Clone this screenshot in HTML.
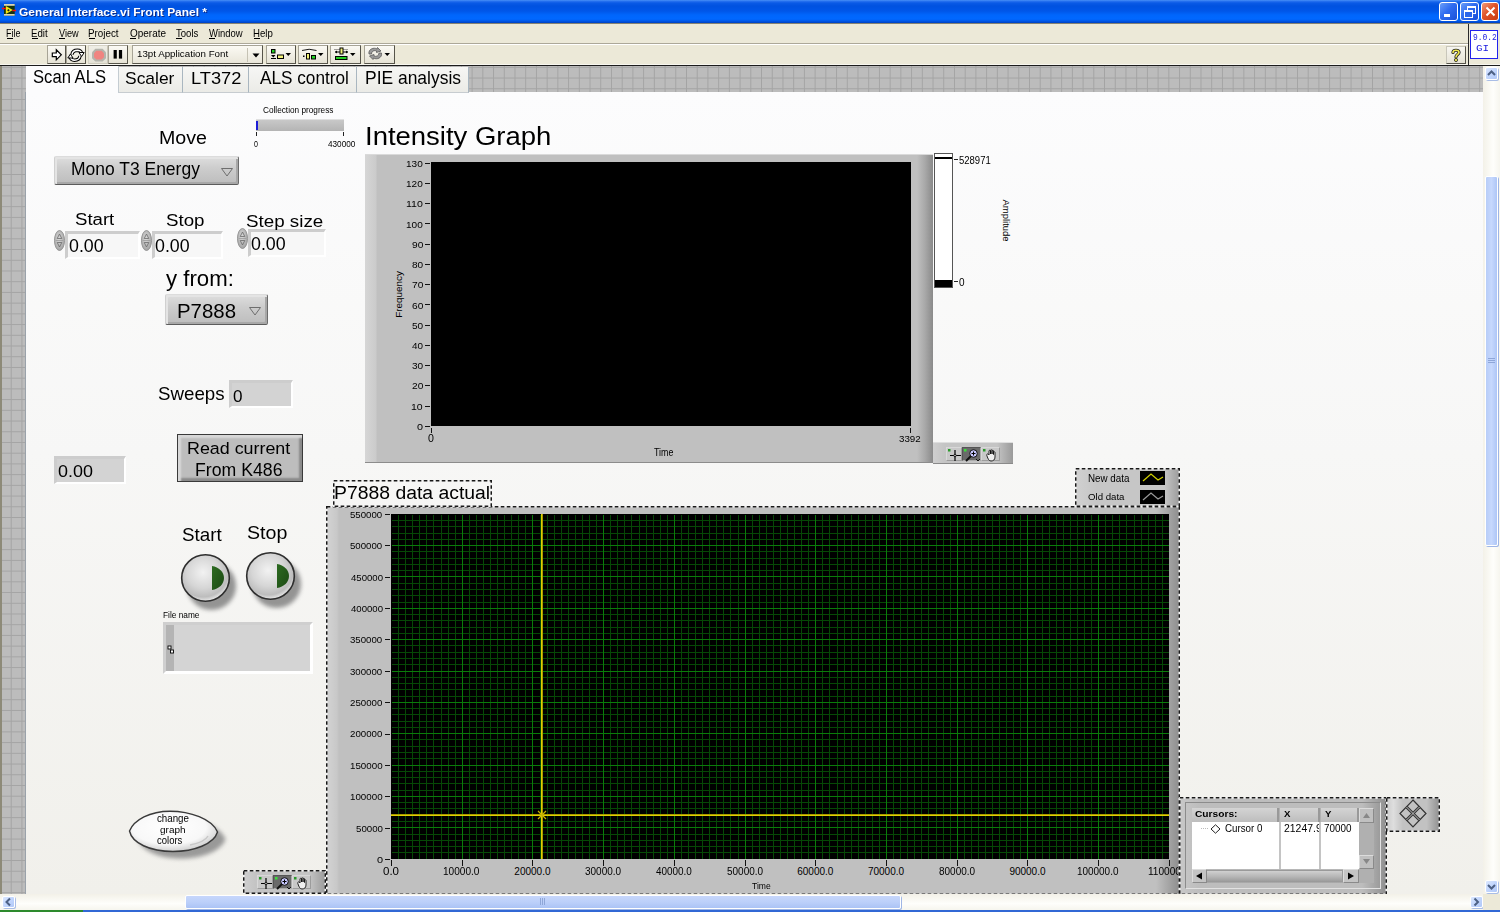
<!DOCTYPE html>
<html><head><meta charset="utf-8"><style>
html,body{margin:0;padding:0;width:1500px;height:912px;overflow:hidden;background:#ece9d8}
.t{position:absolute;line-height:1;white-space:pre;transform-origin:0 0;font-family:"Liberation Sans",sans-serif}
</style></head><body>
<div style="position:absolute;left:0px;top:0px;width:1500px;height:912px;background:#ece9d8"></div><div style="position:absolute;left:0px;top:66px;width:1483px;height:828px;background-color:#bcbcbc;background-image:linear-gradient(to right,#a4a4a4 0,#a4a4a4 1px,transparent 1px),linear-gradient(to bottom,#a4a4a4 0,#a4a4a4 1px,transparent 1px);background-size:10.72px 10.72px;background-position:0 0.84px"></div><div style="position:absolute;left:0px;top:66px;width:2px;height:844px;background:#8d8a78"></div><div style="position:absolute;left:25px;top:92px;width:1px;height:802px;background:#9aa2aa"></div><div style="position:absolute;left:0px;top:0px;width:1500px;height:23px;background:linear-gradient(to bottom,#4d95f7 0px,#2a74f0 1px,#0a5ae6 3px,#0052e0 6px,#0056e8 11px,#0066fc 15px,#0068ff 19px,#0058ea 21px,#0040c0 23px)"></div><div style="position:absolute;left:0px;top:23px;width:1500px;height:1px;background:#868373"></div><div style="position:absolute;left:1439px;top:2px;width:19px;height:19px;box-sizing:border-box;border:1px solid #fff;border-radius:3px;background:linear-gradient(135deg,#6a9ef8 0%,#2f6cf0 45%,#1a50d8 100%);overflow:hidden"><div style="position:absolute;left:4px;top:11px;width:6px;height:3px;background:#fff"></div></div><div style="position:absolute;left:1460px;top:2px;width:19px;height:19px;box-sizing:border-box;border:1px solid #fff;border-radius:3px;background:linear-gradient(135deg,#6a9ef8 0%,#2f6cf0 45%,#1a50d8 100%);overflow:hidden"><div style="position:absolute;left:6px;top:3px;width:7px;height:5px;border:1px solid #fff;border-top-width:2px"></div><div style="position:absolute;left:3px;top:7px;width:7px;height:5px;border:1px solid #fff;border-top-width:2px;background:#2b66ea"></div></div><div style="position:absolute;left:1481px;top:2px;width:18px;height:19px;box-sizing:border-box;border:1px solid #fff;border-radius:3px;background:linear-gradient(135deg,#f09a7a 0%,#e0552a 45%,#c83a12 100%);overflow:hidden"><svg width="17" height="17" style="position:absolute;left:0;top:0"><path d="M4.5 4.5 L12.5 12.5 M12.5 4.5 L4.5 12.5" stroke="#fff" stroke-width="2"/></svg></div><svg style="position:absolute;left:0;top:0" width="18" height="18"><rect x="4" y="4" width="10.7" height="11.7" fill="#123412"/><rect x="4" y="4" width="10.7" height="1.8" fill="#d8d4b8"/><rect x="4" y="14" width="10.7" height="1.7" fill="#d8d4b8"/><path d="M5.8 6 L12.8 10 L5.8 14 Z" fill="#f6e614"/><path d="M8.4 8.9 L9.7 10.2 L8.4 11.5 L7.1 10.2 Z" fill="#202020"/><path d="M2 8.5 H6 M12.3 10.5 H16" stroke="#f01010" stroke-width="1.3"/></svg><div style="position:absolute;left:0px;top:43px;width:1469px;height:1px;background:#aca899"></div><div style="position:absolute;left:0px;top:44px;width:1469px;height:1px;background:#ffffff"></div><div style="position:absolute;left:0px;top:64px;width:1500px;height:1px;background:#f8f7f0"></div><div style="position:absolute;left:0px;top:65px;width:1500px;height:1px;background:#1c1c1c"></div><div style="position:absolute;left:1468px;top:24px;width:1px;height:41px;background:#2a2a2a"></div><div style="position:absolute;left:1470px;top:30px;width:28px;height:29px;box-sizing:border-box;border:1.5px solid #2222ee;background:#fff"></div><div style="position:absolute;left:1446px;top:46px;width:20px;height:18px;box-sizing:border-box;border:1px solid;border-color:#c8c6ba #55534a #55534a #c8c6ba;background:linear-gradient(#f7f6f0,#e6e3d6)"><svg width="18" height="16" style="position:absolute;left:0;top:0"><path d="M6 5.5 C6 2.5 12 2.5 12 5.5 C12 7.5 9 7.5 9 10" fill="none" stroke="#222" stroke-width="3.2" stroke-linecap="round"/><path d="M6 5.5 C6 2.5 12 2.5 12 5.5 C12 7.5 9 7.5 9 10" fill="none" stroke="#f2ea50" stroke-width="1.6" stroke-linecap="round"/><circle cx="9" cy="13" r="1.6" fill="#f2ea50" stroke="#222" stroke-width="0.8"/></svg></div><div style="position:absolute;left:47px;top:45px;width:19px;height:19px;box-sizing:border-box;border:1px solid;border-color:#a7a496 #56544a #56544a #a7a496;background:linear-gradient(#fbfaf5,#e6e3d5)"></div><div style="position:absolute;left:66px;top:45px;width:20px;height:19px;box-sizing:border-box;border:1px solid;border-color:#a7a496 #56544a #56544a #a7a496;background:linear-gradient(#fbfaf5,#e6e3d5)"></div><div style="position:absolute;left:88px;top:45px;width:20px;height:19px;box-sizing:border-box;border:1px solid;border-color:#d6d3c6 #c9c6b8 #c9c6b8 #d6d3c6;background:linear-gradient(#efeee6,#e4e2d6)"></div><div style="position:absolute;left:108px;top:45px;width:20px;height:19px;box-sizing:border-box;border:1px solid;border-color:#a7a496 #56544a #56544a #a7a496;background:linear-gradient(#fbfaf5,#e6e3d5)"></div><svg style="position:absolute;left:0;top:0" width="140" height="66"><path d="M52.3 53 H56.3 V49.8 L61.3 54.8 L56.3 59.8 V56.6 H52.3 Z" fill="#fff" stroke="#000" stroke-width="1.2" stroke-linejoin="miter"/><path d="M72 54.5 Q72.5 50.3 77.5 50.3 Q81 50.5 81.5 53" fill="none" stroke="#000" stroke-width="3.4"/><path d="M72 54.5 Q72.5 50.3 77.5 50.3 Q81 50.5 81.5 53" fill="none" stroke="#fff" stroke-width="1.4"/><path d="M79 52.5 H84.2 L81.6 56.5 Z" fill="#fff" stroke="#000" stroke-width="1"/><path d="M80 56 Q79.5 60.2 74.5 60.2 Q71 60 70.5 57.5" fill="none" stroke="#000" stroke-width="3.4"/><path d="M80 56 Q79.5 60.2 74.5 60.2 Q71 60 70.5 57.5" fill="none" stroke="#fff" stroke-width="1.4"/><path d="M67.8 58 H73 L70.4 54 Z" fill="#fff" stroke="#000" stroke-width="1"/><path d="M95.3 48.8 H102.6 L106 52.2 V58.3 L102.6 61.5 H95.3 L92 58.3 V52.2 Z" fill="#b4b4ac"/><path d="M96.3 50.8 H101.6 L104 53.2 V57.3 L101.6 59.6 H96.3 L94 57.3 V53.2 Z" fill="#f08480"/><rect x="113.6" y="50" width="3.2" height="8.6" fill="#000"/><rect x="118.9" y="50" width="3.2" height="8.6" fill="#000"/></svg><div style="position:absolute;left:132px;top:45px;width:131px;height:19px;box-sizing:border-box;border:1px solid;border-color:#a7a496 #56544a #56544a #a7a496;background:linear-gradient(#fbfaf4,#e9e6d9)"><div style="position:absolute;left:114px;top:2px;width:1px;height:14px;background:#c5c2b4"></div><svg width="10" height="6" style="position:absolute;left:119px;top:7px"><path d="M0.5 0.5 H7.5 L4 4.5 Z" fill="#000"/></svg></div><div style="position:absolute;left:266px;top:45px;width:30px;height:19px;box-sizing:border-box;border:1px solid;border-color:#a7a496 #56544a #56544a #a7a496;background:linear-gradient(#fbfaf5,#e6e3d5)"></div><div style="position:absolute;left:298px;top:45px;width:30px;height:19px;box-sizing:border-box;border:1px solid;border-color:#a7a496 #56544a #56544a #a7a496;background:linear-gradient(#fbfaf5,#e6e3d5)"></div><div style="position:absolute;left:330px;top:45px;width:31px;height:19px;box-sizing:border-box;border:1px solid;border-color:#a7a496 #56544a #56544a #a7a496;background:linear-gradient(#fbfaf5,#e6e3d5)"></div><div style="position:absolute;left:364px;top:45px;width:31px;height:19px;box-sizing:border-box;border:1px solid;border-color:#a7a496 #56544a #56544a #a7a496;background:linear-gradient(#fbfaf5,#e6e3d5)"></div><svg style="position:absolute;left:0;top:0" width="400" height="66"><rect x="271.5" y="49.5" width="3.5" height="3.5" fill="#22d022" stroke="#000" stroke-width="1"/><path d="M271 55 H275.5 L273.25 57.5 Z" fill="#000"/><rect x="271" y="58" width="5" height="1" fill="#000"/><rect x="277.5" y="55" width="6" height="3.5" fill="#f2f27a" stroke="#000" stroke-width="1"/><path d="M285.5 53 H291 L288.25 56 Z" fill="#000"/><path d="M302 50.5 Q309 48 316.5 50.5" fill="none" stroke="#000" stroke-width="0.9"/><rect x="303" y="55.5" width="1.5" height="1.5" fill="#000"/><rect x="306.5" y="53.5" width="3" height="5.5" fill="#f2f27a" stroke="#000" stroke-width="1"/><rect x="311.5" y="55.5" width="4" height="3.5" fill="#22d022" stroke="#000" stroke-width="1"/><path d="M318 53 H323.5 L320.75 56 Z" fill="#000"/><path d="M334.5 49.5 H348" stroke="#000" stroke-width="0.7" stroke-dasharray="1 1"/><path d="M335 52 H348" stroke="#000" stroke-width="1"/><path d="M335 52 L337 50.5 V53.5 Z M348 52 L346 50.5 V53.5 Z" fill="#000"/><rect x="340" y="48" width="3" height="6" fill="#f2f27a" stroke="#000" stroke-width="1"/><rect x="335.5" y="56.5" width="11.5" height="3" fill="#22d022" stroke="#000" stroke-width="1"/><path d="M350 53 H355.5 L352.75 56 Z" fill="#000"/><path d="M369 54 C368 49 374 47 377 49 L377.5 47.5 L381 51 L376.5 52.5 L376.5 51 C374.5 50 371.5 51 371.5 54 Z" fill="#9a9a9a" stroke="#5a5a5a" stroke-width="0.8"/><path d="M381.5 53 C382.5 58 376.5 60 373.5 58 L373 59.5 L369.5 56 L374 54.5 L374 56 C376 57 379 56 379 53 Z" fill="#9a9a9a" stroke="#5a5a5a" stroke-width="0.8"/><path d="M384.5 53 H390 L387.25 56 Z" fill="#000"/></svg><div style="position:absolute;left:26px;top:92px;width:1457px;height:802px;background:linear-gradient(to bottom,#fcfcfd 0%,#f7f7f6 45%,#f1f0eb 100%)"></div><div style="position:absolute;left:26px;top:66px;width:93px;height:27px;background:#fcfcfd;border-right:1px solid #c4ccd2;box-sizing:border-box"></div><div style="position:absolute;left:119px;top:67px;width:64px;height:26px;box-sizing:border-box;background:linear-gradient(#f6f6f4,#ebebe7);border-right:1.5px solid #a9b6c0;border-bottom:1px solid #c7ccd0"></div><div style="position:absolute;left:183px;top:67px;width:66px;height:26px;box-sizing:border-box;background:linear-gradient(#f6f6f4,#ebebe7);border-right:1.5px solid #a9b6c0;border-bottom:1px solid #c7ccd0"></div><div style="position:absolute;left:249px;top:67px;width:108px;height:26px;box-sizing:border-box;background:linear-gradient(#f6f6f4,#ebebe7);border-right:1.5px solid #a9b6c0;border-bottom:1px solid #c7ccd0"></div><div style="position:absolute;left:357px;top:67px;width:112px;height:26px;box-sizing:border-box;background:linear-gradient(#f6f6f4,#ebebe7);border-right:1.5px solid #a9b6c0;border-bottom:1px solid #c7ccd0"></div><div style="position:absolute;left:54px;top:156px;width:185px;height:29px;box-sizing:border-box;border:1px solid;border-color:#dcdcdc #6c6c6c #5c5c5c #d0d0d0;border-radius:2px;background:linear-gradient(#dedede 0%,#cdcdcd 40%,#bdbdbd 100%);box-shadow:inset 2px 2px 0 #e4e4e4, inset -2px -2px 0 #a8a8a8"><svg width="13" height="9" style="position:absolute;left:166px;top:11px"><path d="M0.5 0.5 H11.5 L6 8 Z" fill="none" stroke="#6e6e6e" stroke-width="1"/></svg></div><div style="position:absolute;left:165px;top:294px;width:103px;height:31px;box-sizing:border-box;border:1px solid;border-color:#dcdcdc #6c6c6c #5c5c5c #d0d0d0;border-radius:2px;background:linear-gradient(#dedede 0%,#cdcdcd 40%,#bdbdbd 100%);box-shadow:inset 2px 2px 0 #e4e4e4, inset -2px -2px 0 #a8a8a8"><svg width="13" height="9" style="position:absolute;left:83px;top:12px"><path d="M0.5 0.5 H11.5 L6 8 Z" fill="none" stroke="#6e6e6e" stroke-width="1"/></svg></div><div style="position:absolute;left:65px;top:231px;width:75px;height:28px;box-sizing:border-box;border-style:solid;border-width:3px 2px 2px 3px;border-color:#cdcdcd #ffffff #ffffff #cdcdcd;background:#f7f7f7"></div><svg style="position:absolute;left:54px;top:230px" width="11" height="21"><defs><radialGradient id="ig54" cx="45%" cy="40%" r="60%"><stop offset="0" stop-color="#dadada"/><stop offset="1" stop-color="#a4a4a4"/></radialGradient></defs><ellipse cx="5.5" cy="10.5" rx="5" ry="10" fill="url(#ig54)" stroke="#8c8c8c" stroke-width="0.9"/><path d="M5.5 4 L3.2 8.5 H7.8 Z" fill="none" stroke="#6a6a6a" stroke-width="0.8"/><path d="M1.5 10.5 H9.5" stroke="#9a9a9a" stroke-width="0.8"/><path d="M3.2 12.5 H7.8 L5.5 17 Z" fill="none" stroke="#6a6a6a" stroke-width="0.8"/></svg><div style="position:absolute;left:152px;top:231px;width:71px;height:28px;box-sizing:border-box;border-style:solid;border-width:3px 2px 2px 3px;border-color:#cdcdcd #ffffff #ffffff #cdcdcd;background:#f7f7f7"></div><svg style="position:absolute;left:141px;top:230px" width="11" height="21"><defs><radialGradient id="ig141" cx="45%" cy="40%" r="60%"><stop offset="0" stop-color="#dadada"/><stop offset="1" stop-color="#a4a4a4"/></radialGradient></defs><ellipse cx="5.5" cy="10.5" rx="5" ry="10" fill="url(#ig141)" stroke="#8c8c8c" stroke-width="0.9"/><path d="M5.5 4 L3.2 8.5 H7.8 Z" fill="none" stroke="#6a6a6a" stroke-width="0.8"/><path d="M1.5 10.5 H9.5" stroke="#9a9a9a" stroke-width="0.8"/><path d="M3.2 12.5 H7.8 L5.5 17 Z" fill="none" stroke="#6a6a6a" stroke-width="0.8"/></svg><div style="position:absolute;left:248px;top:229px;width:78px;height:28px;box-sizing:border-box;border-style:solid;border-width:3px 2px 2px 3px;border-color:#cdcdcd #ffffff #ffffff #cdcdcd;background:#f7f7f7"></div><svg style="position:absolute;left:237px;top:228px" width="11" height="21"><defs><radialGradient id="ig237" cx="45%" cy="40%" r="60%"><stop offset="0" stop-color="#dadada"/><stop offset="1" stop-color="#a4a4a4"/></radialGradient></defs><ellipse cx="5.5" cy="10.5" rx="5" ry="10" fill="url(#ig237)" stroke="#8c8c8c" stroke-width="0.9"/><path d="M5.5 4 L3.2 8.5 H7.8 Z" fill="none" stroke="#6a6a6a" stroke-width="0.8"/><path d="M1.5 10.5 H9.5" stroke="#9a9a9a" stroke-width="0.8"/><path d="M3.2 12.5 H7.8 L5.5 17 Z" fill="none" stroke="#6a6a6a" stroke-width="0.8"/></svg><div style="position:absolute;left:229px;top:380px;width:64px;height:28px;box-sizing:border-box;border-style:solid;border-width:3px 2px 2px 3px;border-color:#cdcdcd #ffffff #ffffff #cdcdcd;background:#d3d3d3"></div><div style="position:absolute;left:54px;top:456px;width:72px;height:28px;box-sizing:border-box;border-style:solid;border-width:3px 2px 2px 3px;border-color:#cdcdcd #ffffff #ffffff #cdcdcd;background:#d3d3d3"></div><div style="position:absolute;left:177px;top:434px;width:126px;height:48px;box-sizing:border-box;border:1px solid #3a3a3a;background:#bdbdbd;box-shadow:inset 3px 3px 2px #d8d8d8, inset -3px -3px 2px #8a8a8a"></div><div style="position:absolute;left:256px;top:119px;width:88px;height:12px;box-sizing:border-box;background:linear-gradient(#c8c8c8,#b4b4b4);border-top:1px solid #e0e0e0"></div><div style="position:absolute;left:256px;top:121px;width:2px;height:9px;background:#1d1dd6"></div><div style="position:absolute;left:256px;top:132px;width:1px;height:4px;background:#222"></div><div style="position:absolute;left:343px;top:132px;width:1px;height:4px;background:#222"></div><svg style="position:absolute;left:177px;top:550px;overflow:visible" width="66" height="66"><defs><filter id="bl181" x="-30%" y="-30%" width="160%" height="160%"><feGaussianBlur stdDeviation="2.2"/></filter><radialGradient id="rg181" cx="45%" cy="38%" r="62%"><stop offset="0" stop-color="#f2f2f2"/><stop offset="0.55" stop-color="#d6d6d6"/><stop offset="0.85" stop-color="#bdbdbd"/><stop offset="1" stop-color="#e8e8e8"/></radialGradient><linearGradient id="gg181" x1="0" y1="0" x2="1" y2="1"><stop offset="0" stop-color="#2c6a20"/><stop offset="1" stop-color="#1c4a14"/></linearGradient></defs><ellipse cx="34.5" cy="36" rx="24.5" ry="24" fill="#7c7c7c" opacity="0.8" filter="url(#bl181)"/><ellipse cx="28.5" cy="28" rx="23.8" ry="23.2" fill="url(#rg181)" stroke="#2e2e2e" stroke-width="1.6"/><path d="M35 16 C42 17 47 22 47 28 C47 34 42 39 35 40 Z" fill="url(#gg181)"/></svg><svg style="position:absolute;left:242px;top:548px;overflow:visible" width="66" height="66"><defs><filter id="bl246" x="-30%" y="-30%" width="160%" height="160%"><feGaussianBlur stdDeviation="2.2"/></filter><radialGradient id="rg246" cx="45%" cy="38%" r="62%"><stop offset="0" stop-color="#f2f2f2"/><stop offset="0.55" stop-color="#d6d6d6"/><stop offset="0.85" stop-color="#bdbdbd"/><stop offset="1" stop-color="#e8e8e8"/></radialGradient><linearGradient id="gg246" x1="0" y1="0" x2="1" y2="1"><stop offset="0" stop-color="#2c6a20"/><stop offset="1" stop-color="#1c4a14"/></linearGradient></defs><ellipse cx="34.5" cy="36" rx="24.5" ry="24" fill="#7c7c7c" opacity="0.8" filter="url(#bl246)"/><ellipse cx="28.5" cy="28" rx="23.8" ry="23.2" fill="url(#rg246)" stroke="#2e2e2e" stroke-width="1.6"/><path d="M35 16 C42 17 47 22 47 28 C47 34 42 39 35 40 Z" fill="url(#gg246)"/></svg><div style="position:absolute;left:163px;top:622px;width:150px;height:52px;box-sizing:border-box;border-style:solid;border-width:3px 3px 3px 3px;border-color:#cfcfcf #ffffff #ffffff #cfcfcf;background:#d4d4d4"><div style="position:absolute;left:0;top:0;width:8px;height:100%;background:#b4b4b4"></div><svg width="8" height="10" style="position:absolute;left:1px;top:20px"><rect x="1" y="1" width="3" height="3" fill="#fff" stroke="#000" stroke-width="0.9"/><rect x="3.5" y="5" width="3" height="3" fill="#fff" stroke="#000" stroke-width="0.9"/></svg></div><svg style="position:absolute;left:120px;top:800px;overflow:visible" width="120" height="70"><defs><filter id="ovb" x="-20%" y="-40%" width="140%" height="180%"><feGaussianBlur stdDeviation="2"/></filter><radialGradient id="ovg" cx="45%" cy="40%" r="60%"><stop offset="0" stop-color="#ffffff"/><stop offset="0.7" stop-color="#f8f8f8"/><stop offset="1" stop-color="#d0d0d0"/></radialGradient></defs><path transform="translate(8,7)" d="M9.5 31 C14 20 30 11.2 50 11.2 C70 11.2 92 19 97.5 32 C94 44 74 51.5 53 51.5 C30 51.5 12 43 9.5 31 Z" fill="#8a8a8a" opacity="0.85" filter="url(#ovb)"/><path d="M9.5 31 C14 20 30 11.2 50 11.2 C70 11.2 92 19 97.5 32 C94 44 74 51.5 53 51.5 C30 51.5 12 43 9.5 31 Z" fill="url(#ovg)" stroke="#3a3a3a" stroke-width="1.4"/><path d="M70 45 C80 43 86 40 88 36" fill="none" stroke="#c8c8c8" stroke-width="1.5"/></svg><div style="position:absolute;left:365px;top:154px;width:568px;height:309px;background:linear-gradient(to right,#d6d6d6 0px,#cbcbcb 11px,#c0c0c0 12px,#c0c0c0 552px,#a8a8a8 560px,#8a8a8a 568px);border-top:1px solid #dadada;border-bottom:1px solid #8c8c8c;box-sizing:border-box"></div><div style="position:absolute;left:431px;top:162px;width:480px;height:264px;background:#000"></div><div style="position:absolute;left:425px;top:425.5px;width:5px;height:1.0px;background:#111"></div><div style="position:absolute;left:425px;top:405.5px;width:5px;height:1.0px;background:#111"></div><div style="position:absolute;left:425px;top:385.0px;width:5px;height:1.0px;background:#111"></div><div style="position:absolute;left:425px;top:365.0px;width:5px;height:1.0px;background:#111"></div><div style="position:absolute;left:425px;top:344.5px;width:5px;height:1.0px;background:#111"></div><div style="position:absolute;left:425px;top:324.5px;width:5px;height:1.0px;background:#111"></div><div style="position:absolute;left:425px;top:304.0px;width:5px;height:1.0px;background:#111"></div><div style="position:absolute;left:425px;top:284.0px;width:5px;height:1.0px;background:#111"></div><div style="position:absolute;left:425px;top:263.5px;width:5px;height:1.0px;background:#111"></div><div style="position:absolute;left:425px;top:243.5px;width:5px;height:1.0px;background:#111"></div><div style="position:absolute;left:425px;top:223.0px;width:5px;height:1.0px;background:#111"></div><div style="position:absolute;left:425px;top:203.0px;width:5px;height:1.0px;background:#111"></div><div style="position:absolute;left:425px;top:182.5px;width:5px;height:1.0px;background:#111"></div><div style="position:absolute;left:425px;top:162.5px;width:5px;height:1.0px;background:#111"></div><div style="position:absolute;left:431px;top:428px;width:1px;height:5px;background:#111"></div><div style="position:absolute;left:910px;top:428px;width:1px;height:5px;background:#111"></div><div style="position:absolute;left:934px;top:153px;width:19px;height:135px;box-sizing:border-box;border:1.5px solid #555;background:#fff"></div><div style="position:absolute;left:935px;top:157px;width:17px;height:2px;background:#000"></div><div style="position:absolute;left:935px;top:280px;width:17px;height:7px;background:#000"></div><div style="position:absolute;left:954px;top:159px;width:4px;height:1px;background:#222"></div><div style="position:absolute;left:954px;top:281px;width:4px;height:1px;background:#222"></div><div style="position:absolute;left:933px;top:442px;width:80px;height:22px;box-sizing:border-box;background:linear-gradient(to right,#cfcfcf 0%,#c4c4c4 15%,#c4c4c4 80%,#9a9a9a 100%);border-top:1px solid #dedede;border-bottom:1px solid #8a8a8a"><div style="position:absolute;left:13px;top:4px;width:16px;height:14px;box-sizing:border-box;border:1px solid;border-color:#d8d8d8 #9c9c9c #9c9c9c #d8d8d8;background:#c8c8c8"><svg width="16" height="14" style="position:absolute;left:0;top:0"><path d="M8 2 V13 M3 7.5 H14" stroke="#000" stroke-width="1.2"/><circle cx="8" cy="7.5" r="1.2" fill="#c8c8c8" stroke="#000" stroke-width="0.8"/><rect x="1" y="1" width="2.5" height="2.5" fill="#2a9a2a"/></svg></div><div style="position:absolute;left:29px;top:4px;width:19px;height:14px;box-sizing:border-box;border:1px solid;border-color:#555 #aaa #aaa #555;background:#6a6a6a"><svg width="19" height="14" style="position:absolute;left:0;top:0"><circle cx="10.5" cy="5.5" r="3.8" fill="#c8c8ff" stroke="#111" stroke-width="1"/><path d="M8.5 5.5 H12.5 M10.5 3.5 V7.5" stroke="#000" stroke-width="1"/><path d="M8 8 L3 13" stroke="#111" stroke-width="2"/><path d="M13 11 L15 13 L17 11" stroke="#111" fill="none" stroke-width="1"/><rect x="1" y="1" width="2.5" height="2.5" fill="#3ce03c"/></svg></div><div style="position:absolute;left:48px;top:4px;width:19px;height:14px;box-sizing:border-box;border:1px solid;border-color:#d8d8d8 #9c9c9c #9c9c9c #d8d8d8;background:#c8c8c8"><svg width="19" height="14" style="position:absolute;left:0;top:0"><path d="M5 8 C4 6 6 5 7 7 L7 3 C7 2 8.5 2 8.5 3 L8.5 6 L8.5 2.5 C8.5 1.5 10 1.5 10 2.5 L10 6 L10 3 C10 2 11.5 2 11.5 3 L11.5 6.5 L11.5 4.5 C11.5 3.5 13 3.5 13 4.5 L13 9 C13 12 11 13 9 13 C7 13 6 11 5 8 Z" fill="#f0f0f0" stroke="#111" stroke-width="0.9"/><rect x="1" y="1" width="2.5" height="2.5" fill="#2a9a2a"/></svg></div></div><div style="position:absolute;left:326px;top:506px;width:853px;height:388px;background:linear-gradient(to right,#d4d4d4 0px,#c8c8c8 11px,#c0c0c0 13px,#c0c0c0 830px,#a4a4a4 843px,#8e8e8e 853px);border-top:1px solid #d8d8d8"></div><svg style="position:absolute;left:391px;top:514px" width="778" height="345" shape-rendering="crispEdges"><rect width="778" height="345" fill="#000"/><rect x="7" y="0" width="1" height="345" fill="#064806"/><rect x="14" y="0" width="1" height="345" fill="#064806"/><rect x="21" y="0" width="1" height="345" fill="#064806"/><rect x="28" y="0" width="1" height="345" fill="#064806"/><rect x="35" y="0" width="1" height="345" fill="#064806"/><rect x="42" y="0" width="1" height="345" fill="#064806"/><rect x="50" y="0" width="1" height="345" fill="#064806"/><rect x="57" y="0" width="1" height="345" fill="#064806"/><rect x="64" y="0" width="1" height="345" fill="#064806"/><rect x="78" y="0" width="1" height="345" fill="#064806"/><rect x="85" y="0" width="1" height="345" fill="#064806"/><rect x="92" y="0" width="1" height="345" fill="#064806"/><rect x="99" y="0" width="1" height="345" fill="#064806"/><rect x="106" y="0" width="1" height="345" fill="#064806"/><rect x="113" y="0" width="1" height="345" fill="#064806"/><rect x="120" y="0" width="1" height="345" fill="#064806"/><rect x="127" y="0" width="1" height="345" fill="#064806"/><rect x="134" y="0" width="1" height="345" fill="#064806"/><rect x="149" y="0" width="1" height="345" fill="#064806"/><rect x="156" y="0" width="1" height="345" fill="#064806"/><rect x="163" y="0" width="1" height="345" fill="#064806"/><rect x="170" y="0" width="1" height="345" fill="#064806"/><rect x="177" y="0" width="1" height="345" fill="#064806"/><rect x="184" y="0" width="1" height="345" fill="#064806"/><rect x="191" y="0" width="1" height="345" fill="#064806"/><rect x="198" y="0" width="1" height="345" fill="#064806"/><rect x="205" y="0" width="1" height="345" fill="#064806"/><rect x="219" y="0" width="1" height="345" fill="#064806"/><rect x="226" y="0" width="1" height="345" fill="#064806"/><rect x="233" y="0" width="1" height="345" fill="#064806"/><rect x="240" y="0" width="1" height="345" fill="#064806"/><rect x="248" y="0" width="1" height="345" fill="#064806"/><rect x="255" y="0" width="1" height="345" fill="#064806"/><rect x="262" y="0" width="1" height="345" fill="#064806"/><rect x="269" y="0" width="1" height="345" fill="#064806"/><rect x="276" y="0" width="1" height="345" fill="#064806"/><rect x="290" y="0" width="1" height="345" fill="#064806"/><rect x="297" y="0" width="1" height="345" fill="#064806"/><rect x="304" y="0" width="1" height="345" fill="#064806"/><rect x="311" y="0" width="1" height="345" fill="#064806"/><rect x="318" y="0" width="1" height="345" fill="#064806"/><rect x="325" y="0" width="1" height="345" fill="#064806"/><rect x="332" y="0" width="1" height="345" fill="#064806"/><rect x="339" y="0" width="1" height="345" fill="#064806"/><rect x="347" y="0" width="1" height="345" fill="#064806"/><rect x="361" y="0" width="1" height="345" fill="#064806"/><rect x="368" y="0" width="1" height="345" fill="#064806"/><rect x="375" y="0" width="1" height="345" fill="#064806"/><rect x="382" y="0" width="1" height="345" fill="#064806"/><rect x="389" y="0" width="1" height="345" fill="#064806"/><rect x="396" y="0" width="1" height="345" fill="#064806"/><rect x="403" y="0" width="1" height="345" fill="#064806"/><rect x="410" y="0" width="1" height="345" fill="#064806"/><rect x="417" y="0" width="1" height="345" fill="#064806"/><rect x="431" y="0" width="1" height="345" fill="#064806"/><rect x="438" y="0" width="1" height="345" fill="#064806"/><rect x="446" y="0" width="1" height="345" fill="#064806"/><rect x="453" y="0" width="1" height="345" fill="#064806"/><rect x="460" y="0" width="1" height="345" fill="#064806"/><rect x="467" y="0" width="1" height="345" fill="#064806"/><rect x="474" y="0" width="1" height="345" fill="#064806"/><rect x="481" y="0" width="1" height="345" fill="#064806"/><rect x="488" y="0" width="1" height="345" fill="#064806"/><rect x="502" y="0" width="1" height="345" fill="#064806"/><rect x="509" y="0" width="1" height="345" fill="#064806"/><rect x="516" y="0" width="1" height="345" fill="#064806"/><rect x="523" y="0" width="1" height="345" fill="#064806"/><rect x="530" y="0" width="1" height="345" fill="#064806"/><rect x="537" y="0" width="1" height="345" fill="#064806"/><rect x="545" y="0" width="1" height="345" fill="#064806"/><rect x="552" y="0" width="1" height="345" fill="#064806"/><rect x="559" y="0" width="1" height="345" fill="#064806"/><rect x="573" y="0" width="1" height="345" fill="#064806"/><rect x="580" y="0" width="1" height="345" fill="#064806"/><rect x="587" y="0" width="1" height="345" fill="#064806"/><rect x="594" y="0" width="1" height="345" fill="#064806"/><rect x="601" y="0" width="1" height="345" fill="#064806"/><rect x="608" y="0" width="1" height="345" fill="#064806"/><rect x="615" y="0" width="1" height="345" fill="#064806"/><rect x="622" y="0" width="1" height="345" fill="#064806"/><rect x="629" y="0" width="1" height="345" fill="#064806"/><rect x="644" y="0" width="1" height="345" fill="#064806"/><rect x="651" y="0" width="1" height="345" fill="#064806"/><rect x="658" y="0" width="1" height="345" fill="#064806"/><rect x="665" y="0" width="1" height="345" fill="#064806"/><rect x="672" y="0" width="1" height="345" fill="#064806"/><rect x="679" y="0" width="1" height="345" fill="#064806"/><rect x="686" y="0" width="1" height="345" fill="#064806"/><rect x="693" y="0" width="1" height="345" fill="#064806"/><rect x="700" y="0" width="1" height="345" fill="#064806"/><rect x="714" y="0" width="1" height="345" fill="#064806"/><rect x="721" y="0" width="1" height="345" fill="#064806"/><rect x="728" y="0" width="1" height="345" fill="#064806"/><rect x="735" y="0" width="1" height="345" fill="#064806"/><rect x="743" y="0" width="1" height="345" fill="#064806"/><rect x="750" y="0" width="1" height="345" fill="#064806"/><rect x="757" y="0" width="1" height="345" fill="#064806"/><rect x="764" y="0" width="1" height="345" fill="#064806"/><rect x="771" y="0" width="1" height="345" fill="#064806"/><rect x="0" y="6" width="778" height="1" fill="#064806"/><rect x="0" y="12" width="778" height="1" fill="#064806"/><rect x="0" y="19" width="778" height="1" fill="#064806"/><rect x="0" y="25" width="778" height="1" fill="#064806"/><rect x="0" y="37" width="778" height="1" fill="#064806"/><rect x="0" y="44" width="778" height="1" fill="#064806"/><rect x="0" y="50" width="778" height="1" fill="#064806"/><rect x="0" y="56" width="778" height="1" fill="#064806"/><rect x="0" y="69" width="778" height="1" fill="#064806"/><rect x="0" y="75" width="778" height="1" fill="#064806"/><rect x="0" y="81" width="778" height="1" fill="#064806"/><rect x="0" y="88" width="778" height="1" fill="#064806"/><rect x="0" y="100" width="778" height="1" fill="#064806"/><rect x="0" y="106" width="778" height="1" fill="#064806"/><rect x="0" y="113" width="778" height="1" fill="#064806"/><rect x="0" y="119" width="778" height="1" fill="#064806"/><rect x="0" y="131" width="778" height="1" fill="#064806"/><rect x="0" y="138" width="778" height="1" fill="#064806"/><rect x="0" y="144" width="778" height="1" fill="#064806"/><rect x="0" y="150" width="778" height="1" fill="#064806"/><rect x="0" y="163" width="778" height="1" fill="#064806"/><rect x="0" y="169" width="778" height="1" fill="#064806"/><rect x="0" y="175" width="778" height="1" fill="#064806"/><rect x="0" y="182" width="778" height="1" fill="#064806"/><rect x="0" y="194" width="778" height="1" fill="#064806"/><rect x="0" y="200" width="778" height="1" fill="#064806"/><rect x="0" y="207" width="778" height="1" fill="#064806"/><rect x="0" y="213" width="778" height="1" fill="#064806"/><rect x="0" y="225" width="778" height="1" fill="#064806"/><rect x="0" y="232" width="778" height="1" fill="#064806"/><rect x="0" y="238" width="778" height="1" fill="#064806"/><rect x="0" y="244" width="778" height="1" fill="#064806"/><rect x="0" y="257" width="778" height="1" fill="#064806"/><rect x="0" y="263" width="778" height="1" fill="#064806"/><rect x="0" y="269" width="778" height="1" fill="#064806"/><rect x="0" y="276" width="778" height="1" fill="#064806"/><rect x="0" y="288" width="778" height="1" fill="#064806"/><rect x="0" y="294" width="778" height="1" fill="#064806"/><rect x="0" y="301" width="778" height="1" fill="#064806"/><rect x="0" y="307" width="778" height="1" fill="#064806"/><rect x="0" y="320" width="778" height="1" fill="#064806"/><rect x="0" y="326" width="778" height="1" fill="#064806"/><rect x="0" y="332" width="778" height="1" fill="#064806"/><rect x="0" y="338" width="778" height="1" fill="#064806"/><rect x="0" y="0" width="1" height="345" fill="#0a7c0a"/><rect x="71" y="0" width="1" height="345" fill="#0a7c0a"/><rect x="141" y="0" width="1" height="345" fill="#0a7c0a"/><rect x="212" y="0" width="1" height="345" fill="#0a7c0a"/><rect x="283" y="0" width="1" height="345" fill="#0a7c0a"/><rect x="354" y="0" width="1" height="345" fill="#0a7c0a"/><rect x="424" y="0" width="1" height="345" fill="#0a7c0a"/><rect x="495" y="0" width="1" height="345" fill="#0a7c0a"/><rect x="566" y="0" width="1" height="345" fill="#0a7c0a"/><rect x="636" y="0" width="1" height="345" fill="#0a7c0a"/><rect x="707" y="0" width="1" height="345" fill="#0a7c0a"/><rect x="0" y="0" width="778" height="1" fill="#0a7c0a"/><rect x="0" y="31" width="778" height="1" fill="#0a7c0a"/><rect x="0" y="62" width="778" height="1" fill="#0a7c0a"/><rect x="0" y="94" width="778" height="1" fill="#0a7c0a"/><rect x="0" y="125" width="778" height="1" fill="#0a7c0a"/><rect x="0" y="157" width="778" height="1" fill="#0a7c0a"/><rect x="0" y="188" width="778" height="1" fill="#0a7c0a"/><rect x="0" y="219" width="778" height="1" fill="#0a7c0a"/><rect x="0" y="251" width="778" height="1" fill="#0a7c0a"/><rect x="0" y="282" width="778" height="1" fill="#0a7c0a"/><rect x="0" y="313" width="778" height="1" fill="#0a7c0a"/></svg><div style="position:absolute;left:391px;top:514px;width:778px;height:1px;background:#000"></div><div style="position:absolute;left:391px;top:514px;width:1px;height:345px;background:#000"></div><div style="position:absolute;left:391px;top:814px;width:778px;height:2px;background:linear-gradient(#a89a00 0,#a89a00 50%,#e0d000 50%)"></div><div style="position:absolute;left:541px;top:514px;width:2px;height:345px;background:linear-gradient(to right,#e0d000 0,#e0d000 50%,#a89a00 50%)"></div><svg style="position:absolute;left:537px;top:810px" width="10" height="10"><path d="M1 1 L9 9 M9 1 L1 9" stroke="#c8b400" stroke-width="1.2"/></svg><div style="position:absolute;left:385px;top:858.5px;width:5px;height:1.0px;background:#111"></div><div style="position:absolute;left:385px;top:827.5px;width:5px;height:1.0px;background:#111"></div><div style="position:absolute;left:385px;top:795.5px;width:5px;height:1.0px;background:#111"></div><div style="position:absolute;left:385px;top:764.5px;width:5px;height:1.0px;background:#111"></div><div style="position:absolute;left:385px;top:733.5px;width:5px;height:1.0px;background:#111"></div><div style="position:absolute;left:385px;top:701.5px;width:5px;height:1.0px;background:#111"></div><div style="position:absolute;left:385px;top:670.5px;width:5px;height:1.0px;background:#111"></div><div style="position:absolute;left:385px;top:638.5px;width:5px;height:1.0px;background:#111"></div><div style="position:absolute;left:385px;top:607.5px;width:5px;height:1.0px;background:#111"></div><div style="position:absolute;left:385px;top:576.5px;width:5px;height:1.0px;background:#111"></div><div style="position:absolute;left:385px;top:544.5px;width:5px;height:1.0px;background:#111"></div><div style="position:absolute;left:385px;top:513.5px;width:5px;height:1.0px;background:#111"></div><div style="position:absolute;left:391px;top:860px;width:1px;height:6px;background:#111"></div><div style="position:absolute;left:462px;top:860px;width:1px;height:6px;background:#111"></div><div style="position:absolute;left:532px;top:860px;width:1px;height:6px;background:#111"></div><div style="position:absolute;left:603px;top:860px;width:1px;height:6px;background:#111"></div><div style="position:absolute;left:674px;top:860px;width:1px;height:6px;background:#111"></div><div style="position:absolute;left:745px;top:860px;width:1px;height:6px;background:#111"></div><div style="position:absolute;left:815px;top:860px;width:1px;height:6px;background:#111"></div><div style="position:absolute;left:886px;top:860px;width:1px;height:6px;background:#111"></div><div style="position:absolute;left:957px;top:860px;width:1px;height:6px;background:#111"></div><div style="position:absolute;left:1027px;top:860px;width:1px;height:6px;background:#111"></div><div style="position:absolute;left:1098px;top:860px;width:1px;height:6px;background:#111"></div><div style="position:absolute;left:1169px;top:860px;width:1px;height:6px;background:#111"></div><svg style="position:absolute;left:325px;top:505px;overflow:visible" width="856" height="391"><rect x="1.75" y="1.75" width="852.5" height="387.5" fill="none" stroke="#f4f4f4" stroke-width="1.5"/><rect x="1.75" y="1.75" width="852.5" height="387.5" fill="none" stroke="#181818" stroke-width="1.5" stroke-dasharray="3.6 2.4"/></svg><svg style="position:absolute;left:332px;top:479px;overflow:visible" width="161" height="29"><rect x="1.75" y="1.75" width="157.5" height="25.5" fill="none" stroke="#f4f4f4" stroke-width="1.5"/><rect x="1.75" y="1.75" width="157.5" height="25.5" fill="none" stroke="#181818" stroke-width="1.5" stroke-dasharray="3.6 2.4"/></svg><div style="position:absolute;left:1076px;top:469px;width:104px;height:37px;background:linear-gradient(to right,#d0d0d0 0%,#c6c6c6 20%,#c6c6c6 85%,#9a9a9a 100%)"></div><div style="position:absolute;left:1140px;top:471px;width:25px;height:14px;background:#000"><svg width="25" height="14" style="position:absolute;left:0;top:0"><path d="M3 10 L11 3 L18 9 L23 6" fill="none" stroke="#d0d000" stroke-width="1.2"/></svg></div><div style="position:absolute;left:1140px;top:490px;width:25px;height:14px;background:#000"><svg width="25" height="14" style="position:absolute;left:0;top:0"><path d="M3 10 L11 3 L18 9 L23 6" fill="none" stroke="#9a9a9a" stroke-width="1.2"/></svg></div><svg style="position:absolute;left:1074px;top:467px;overflow:visible" width="107" height="41"><rect x="1.75" y="1.75" width="103.5" height="37.5" fill="none" stroke="#f4f4f4" stroke-width="1.5"/><rect x="1.75" y="1.75" width="103.5" height="37.5" fill="none" stroke="#181818" stroke-width="1.5" stroke-dasharray="3.6 2.4"/></svg><div style="position:absolute;left:243px;top:870px;width:83px;height:23px;box-sizing:border-box;background:linear-gradient(to right,#cfcfcf 0%,#c4c4c4 15%,#c4c4c4 80%,#9a9a9a 100%);border-top:1px solid #dedede;border-bottom:1px solid #8a8a8a"><div style="position:absolute;left:14px;top:4px;width:16px;height:14px;box-sizing:border-box;border:1px solid;border-color:#d8d8d8 #9c9c9c #9c9c9c #d8d8d8;background:#c8c8c8"><svg width="16" height="14" style="position:absolute;left:0;top:0"><path d="M8 2 V13 M3 7.5 H14" stroke="#000" stroke-width="1.2"/><circle cx="8" cy="7.5" r="1.2" fill="#c8c8c8" stroke="#000" stroke-width="0.8"/><rect x="1" y="1" width="2.5" height="2.5" fill="#2a9a2a"/></svg></div><div style="position:absolute;left:30px;top:4px;width:19px;height:14px;box-sizing:border-box;border:1px solid;border-color:#555 #aaa #aaa #555;background:#6a6a6a"><svg width="19" height="14" style="position:absolute;left:0;top:0"><circle cx="10.5" cy="5.5" r="3.8" fill="#c8c8ff" stroke="#111" stroke-width="1"/><path d="M8.5 5.5 H12.5 M10.5 3.5 V7.5" stroke="#000" stroke-width="1"/><path d="M8 8 L3 13" stroke="#111" stroke-width="2"/><path d="M13 11 L15 13 L17 11" stroke="#111" fill="none" stroke-width="1"/><rect x="1" y="1" width="2.5" height="2.5" fill="#3ce03c"/></svg></div><div style="position:absolute;left:49px;top:4px;width:19px;height:14px;box-sizing:border-box;border:1px solid;border-color:#d8d8d8 #9c9c9c #9c9c9c #d8d8d8;background:#c8c8c8"><svg width="19" height="14" style="position:absolute;left:0;top:0"><path d="M5 8 C4 6 6 5 7 7 L7 3 C7 2 8.5 2 8.5 3 L8.5 6 L8.5 2.5 C8.5 1.5 10 1.5 10 2.5 L10 6 L10 3 C10 2 11.5 2 11.5 3 L11.5 6.5 L11.5 4.5 C11.5 3.5 13 3.5 13 4.5 L13 9 C13 12 11 13 9 13 C7 13 6 11 5 8 Z" fill="#f0f0f0" stroke="#111" stroke-width="0.9"/><rect x="1" y="1" width="2.5" height="2.5" fill="#2a9a2a"/></svg></div></div><svg style="position:absolute;left:242px;top:869px;overflow:visible" width="85" height="26"><rect x="1.75" y="1.75" width="81.5" height="22.5" fill="none" stroke="#f4f4f4" stroke-width="1.5"/><rect x="1.75" y="1.75" width="81.5" height="22.5" fill="none" stroke="#181818" stroke-width="1.5" stroke-dasharray="3.6 2.4"/></svg><div style="position:absolute;left:1179px;top:797px;width:208px;height:97px;background:linear-gradient(to right,#c8c8c8 0%,#bdbdbd 10%,#bdbdbd 88%,#8e8e8e 100%);box-shadow:inset 0 2px 0 #d6d6d6"></div><div style="position:absolute;left:1185px;top:802px;width:196px;height:87px;box-sizing:border-box;border:1px solid;border-color:#8c8c8c #e2e2e2 #e2e2e2 #8c8c8c"></div><div style="position:absolute;left:1192px;top:808px;width:182px;height:75px;background:#b0b0b0"></div><div style="position:absolute;left:1192px;top:822px;width:167px;height:47px;background:#fff"></div><div style="position:absolute;left:1192px;top:808px;width:87px;height:14px;box-sizing:border-box;background:linear-gradient(#d4d4d4,#bdbdbd);border-right:2px solid #999"></div><div style="position:absolute;left:1280px;top:808px;width:40px;height:14px;box-sizing:border-box;background:linear-gradient(#d4d4d4,#bdbdbd);border-right:2px solid #999"></div><div style="position:absolute;left:1321px;top:808px;width:38px;height:14px;box-sizing:border-box;background:linear-gradient(#d4d4d4,#bdbdbd);border-right:2px solid #999"></div><div style="position:absolute;left:1279px;top:822px;width:2px;height:47px;background:#c4c4c4"></div><div style="position:absolute;left:1319px;top:822px;width:2px;height:47px;background:#c4c4c4"></div><div style="position:absolute;left:1359px;top:808px;width:15px;height:15px;box-sizing:border-box;border:1px solid;border-color:#dcdcdc #8a8a8a #8a8a8a #dcdcdc;background:#c0c0c0"><svg width="13" height="13" style="position:absolute;left:0;top:0"><path d="M3 9 L6.5 4 L10 9 Z" fill="#888"/></svg></div><div style="position:absolute;left:1359px;top:855px;width:15px;height:14px;box-sizing:border-box;border:1px solid;border-color:#dcdcdc #8a8a8a #8a8a8a #dcdcdc;background:#c0c0c0"><svg width="13" height="12" style="position:absolute;left:0;top:0"><path d="M3 3 L6.5 8 L10 3 Z" fill="#888"/></svg></div><div style="position:absolute;left:1192px;top:869px;width:167px;height:14px;background:linear-gradient(#b8b8b8,#a8a8a8)"></div><div style="position:absolute;left:1206px;top:870px;width:137px;height:12px;box-sizing:border-box;border:1px solid #9a9a9a;background:linear-gradient(#d0d0d0,#b4b4b4 60%,#9e9e9e)"></div><div style="position:absolute;left:1192px;top:869px;width:15px;height:14px;box-sizing:border-box;border:1px solid;border-color:#dcdcdc #8a8a8a #8a8a8a #dcdcdc;background:#c4c4c4"><svg width="13" height="12" style="position:absolute;left:0;top:0"><path d="M3 6 L9 2.5 L9 9.5 Z" fill="#000"/></svg></div><div style="position:absolute;left:1343px;top:869px;width:16px;height:14px;box-sizing:border-box;border:1px solid;border-color:#dcdcdc #8a8a8a #8a8a8a #dcdcdc;background:#c4c4c4"><svg width="14" height="12" style="position:absolute;left:0;top:0"><path d="M10 6 L4 2.5 L4 9.5 Z" fill="#000"/></svg></div><svg style="position:absolute;left:1210px;top:824px" width="11" height="10"><path d="M5.5 0.8 L10 5 L5.5 9.2 L1 5 Z" fill="none" stroke="#222" stroke-width="1"/></svg><div style="position:absolute;left:1201px;top:828px;width:8px;height:1px;background:repeating-linear-gradient(to right,#bbb 0,#bbb 1px,transparent 1px,transparent 2px)"></div><svg style="position:absolute;left:1178px;top:796px;overflow:visible" width="210" height="100"><rect x="1.75" y="1.75" width="206.5" height="96.5" fill="none" stroke="#f4f4f4" stroke-width="1.5"/><rect x="1.75" y="1.75" width="206.5" height="96.5" fill="none" stroke="#181818" stroke-width="1.5" stroke-dasharray="3.6 2.4"/></svg><div style="position:absolute;left:1387px;top:797px;width:53px;height:34px;background:linear-gradient(to right,#cdcdcd 0%,#dedede 12%,#c2c2c2 30%,#c2c2c2 75%,#8e8e8e 100%)"><svg width="53" height="34" style="position:absolute;left:0;top:0"><path d="M26 3 L39 16.5 L26 30 L13 16.5 Z" fill="none" stroke="#333" stroke-width="1.2"/><path d="M19.5 10 L32.5 23 M32.5 10 L19.5 23" stroke="#333" stroke-width="3"/><path d="M19.5 10 L32.5 23 M32.5 10 L19.5 23" stroke="#c2c2c2" stroke-width="1"/></svg></div><svg style="position:absolute;left:1385px;top:796px;overflow:visible" width="56" height="37"><rect x="1.75" y="1.75" width="52.5" height="33.5" fill="none" stroke="#f4f4f4" stroke-width="1.5"/><rect x="1.75" y="1.75" width="52.5" height="33.5" fill="none" stroke="#181818" stroke-width="1.5" stroke-dasharray="3.6 2.4"/></svg><div style="position:absolute;left:1483px;top:66px;width:17px;height:828px;background:linear-gradient(to right,#f3f1e8,#fefefb 60%,#f6f5ee)"></div><div style="position:absolute;left:1485px;top:67px;width:13px;height:13px;box-sizing:border-box;border:1px solid #fff;border-radius:2px;background:linear-gradient(135deg,#dce8ff 0%,#c2d6fd 50%,#b0c8f8 100%);box-shadow:1px 1px 0 #a9bde6"><svg width="11" height="11" style="position:absolute;left:0;top:0"><path d="M2 7 L5.5 3.5 L9 7" fill="none" stroke="#4d6185" stroke-width="2"/></svg></div><div style="position:absolute;left:1485px;top:880px;width:13px;height:13px;box-sizing:border-box;border:1px solid #fff;border-radius:2px;background:linear-gradient(135deg,#dce8ff 0%,#c2d6fd 50%,#b0c8f8 100%);box-shadow:1px 1px 0 #a9bde6"><svg width="11" height="11" style="position:absolute;left:0;top:0"><path d="M2 4 L5.5 7.5 L9 4" fill="none" stroke="#4d6185" stroke-width="2"/></svg></div><div style="position:absolute;left:1485px;top:176px;width:13px;height:370px;box-sizing:border-box;border:1px solid #fff;border-radius:2px;background:linear-gradient(to right,#b8cdf8,#c6d8fd 50%,#aec6f6);box-shadow:1px 1px 0 #9fb6e6"></div><div style="position:absolute;left:1488px;top:358px;width:7px;height:6px;background:repeating-linear-gradient(#8ea6d8 0,#8ea6d8 1px,transparent 1px,transparent 2px)"></div><div style="position:absolute;left:0px;top:894px;width:1483px;height:16px;background:linear-gradient(#f3f1e8,#fefefb 60%,#f6f5ee)"></div><div style="position:absolute;left:2px;top:896px;width:13px;height:12px;box-sizing:border-box;border:1px solid #fff;border-radius:2px;background:linear-gradient(135deg,#dce8ff 0%,#c2d6fd 50%,#b0c8f8 100%);box-shadow:1px 1px 0 #a9bde6"><svg width="11" height="10" style="position:absolute;left:0;top:0"><path d="M7 1.5 L3.5 5 L7 8.5" fill="none" stroke="#4d6185" stroke-width="2"/></svg></div><div style="position:absolute;left:1470px;top:896px;width:13px;height:12px;box-sizing:border-box;border:1px solid #fff;border-radius:2px;background:linear-gradient(135deg,#dce8ff 0%,#c2d6fd 50%,#b0c8f8 100%);box-shadow:1px 1px 0 #a9bde6"><svg width="11" height="10" style="position:absolute;left:0;top:0"><path d="M3.5 1.5 L7 5 L3.5 8.5" fill="none" stroke="#4d6185" stroke-width="2"/></svg></div><div style="position:absolute;left:185px;top:895px;width:716px;height:14px;box-sizing:border-box;border:1px solid #fff;border-radius:2px;background:linear-gradient(#c6d6fb,#bcd0fa 50%,#abc3f5);box-shadow:1px 1px 0 #9fb6e6"></div><div style="position:absolute;left:540px;top:898px;width:6px;height:7px;background:repeating-linear-gradient(to right,#8ea6d8 0,#8ea6d8 1px,transparent 1px,transparent 2px)"></div><div style="position:absolute;left:1483px;top:894px;width:17px;height:16px;background:#ece9d8"></div><div style="position:absolute;left:0px;top:910px;width:83px;height:2px;background:#2d8a2d"></div><div style="position:absolute;left:83px;top:910px;width:1417px;height:2px;background:#3168d5"></div><div style="position:absolute;left:7px;top:38px;width:6px;height:1px;background:#000"></div><div style="position:absolute;left:32px;top:38px;width:6px;height:1px;background:#000"></div><div style="position:absolute;left:59px;top:38px;width:6px;height:1px;background:#000"></div><div style="position:absolute;left:89px;top:38px;width:6px;height:1px;background:#000"></div><div style="position:absolute;left:130px;top:38px;width:6px;height:1px;background:#000"></div><div style="position:absolute;left:176px;top:38px;width:6px;height:1px;background:#000"></div><div style="position:absolute;left:209px;top:38px;width:6px;height:1px;background:#000"></div><div style="position:absolute;left:254px;top:38px;width:6px;height:1px;background:#000"></div>
<div class="t" style="left:19.12px;top:6.00px;font-size:11.78px;font-weight:700;color:#fff;font-family:'Liberation Sans';transform:scaleX(1.016);text-shadow:1px 1px 0 #0b2a8a">General Interface.vi Front Panel *</div><div class="t" style="left:6.38px;top:29.00px;font-size:10.27px;font-weight:400;color:#000;font-family:'Liberation Sans';transform:scaleX(0.875)">File</div><div class="t" style="left:30.92px;top:29.00px;font-size:10.27px;font-weight:400;color:#000;font-family:'Liberation Sans';transform:scaleX(0.944)">Edit</div><div class="t" style="left:58.71px;top:29.00px;font-size:10.27px;font-weight:400;color:#000;font-family:'Liberation Sans';transform:scaleX(0.891)">View</div><div class="t" style="left:87.91px;top:29.00px;font-size:10.27px;font-weight:400;color:#000;font-family:'Liberation Sans';transform:scaleX(0.957)">Project</div><div class="t" style="left:129.60px;top:28.00px;font-size:10.71px;font-weight:400;color:#000;font-family:'Liberation Sans';transform:scaleX(0.931)">Operate</div><div class="t" style="left:176.21px;top:29.00px;font-size:10.27px;font-weight:400;color:#000;font-family:'Liberation Sans';transform:scaleX(0.931)">Tools</div><div class="t" style="left:209.31px;top:29.00px;font-size:10.27px;font-weight:400;color:#000;font-family:'Liberation Sans';transform:scaleX(0.921)">Window</div><div class="t" style="left:253.13px;top:29.00px;font-size:10.27px;font-weight:400;color:#000;font-family:'Liberation Sans';transform:scaleX(0.938)">Help</div><div class="t" style="left:136.82px;top:49.00px;font-size:9.59px;font-weight:400;color:#000;font-family:'Liberation Sans';transform:scaleX(1.019)">13pt Application Font</div><div class="t" style="left:1473.14px;top:33.00px;font-size:9.08px;font-weight:400;color:#2020e0;font-family:'Liberation Mono';transform:scaleX(0.874)">9.0.2</div><div class="t" style="left:1476.25px;top:45.00px;font-size:8.82px;font-weight:400;color:#2020e0;font-family:'Liberation Mono';transform:scaleX(1.242)">GI</div><div class="t" style="left:32.67px;top:69.00px;font-size:17.57px;font-weight:400;color:#000;font-family:'Liberation Sans';transform:scaleX(0.946)">Scan ALS</div><div class="t" style="left:124.63px;top:70.00px;font-size:16.16px;font-weight:400;color:#000;font-family:'Liberation Sans';transform:scaleX(1.079)">Scaler</div><div class="t" style="left:190.64px;top:71.00px;font-size:16.86px;font-weight:400;color:#000;font-family:'Liberation Sans';transform:scaleX(1.083)">LT372</div><div class="t" style="left:259.50px;top:70.00px;font-size:17.53px;font-weight:400;color:#000;font-family:'Liberation Sans';transform:scaleX(0.981)">ALS control</div><div class="t" style="left:365.00px;top:70.00px;font-size:17.53px;font-weight:400;color:#000;font-family:'Liberation Sans';transform:scaleX(0.996)">PIE analysis</div><div class="t" style="left:158.53px;top:129.00px;font-size:18.26px;font-weight:400;color:#000;font-family:'Liberation Sans';transform:scaleX(1.074)">Move</div><div class="t" style="left:70.80px;top:161.00px;font-size:17.43px;font-weight:400;color:#000;font-family:'Liberation Sans';transform:scaleX(1.003)">Mono T3 Energy</div><div class="t" style="left:74.97px;top:211.00px;font-size:17.29px;font-weight:400;color:#000;font-family:'Liberation Sans';transform:scaleX(1.076)">Start</div><div class="t" style="left:165.86px;top:212.00px;font-size:17.29px;font-weight:400;color:#000;font-family:'Liberation Sans';transform:scaleX(1.083)">Stop</div><div class="t" style="left:246.06px;top:214.00px;font-size:15.75px;font-weight:400;color:#000;font-family:'Liberation Sans';transform:scaleX(1.192)">Step size</div><div class="t" style="left:68.79px;top:237.00px;font-size:18.43px;font-weight:400;color:#000;font-family:'Liberation Sans';transform:scaleX(0.966)">0.00</div><div class="t" style="left:154.89px;top:237.00px;font-size:18.43px;font-weight:400;color:#000;font-family:'Liberation Sans';transform:scaleX(0.966)">0.00</div><div class="t" style="left:250.79px;top:236.00px;font-size:17.43px;font-weight:400;color:#000;font-family:'Liberation Sans';transform:scaleX(1.022)">0.00</div><div class="t" style="left:166.30px;top:269.00px;font-size:21.37px;font-weight:400;color:#000;font-family:'Liberation Sans';transform:scaleX(1.039)">y from:</div><div class="t" style="left:176.87px;top:301.00px;font-size:20.86px;font-weight:400;color:#000;font-family:'Liberation Sans';transform:scaleX(0.978)">P7888</div><div class="t" style="left:157.96px;top:385.00px;font-size:18.14px;font-weight:400;color:#000;font-family:'Liberation Sans';transform:scaleX(1.032)">Sweeps</div><div class="t" style="left:233.12px;top:388.00px;font-size:17.29px;font-weight:400;color:#000;font-family:'Liberation Sans';transform:scaleX(0.988)">0</div><div class="t" style="left:57.98px;top:463.00px;font-size:17.29px;font-weight:400;color:#000;font-family:'Liberation Sans';transform:scaleX(1.039)">0.00</div><div class="t" style="left:186.97px;top:441.00px;font-size:15.89px;font-weight:400;color:#000;font-family:'Liberation Sans';transform:scaleX(1.125)">Read current</div><div class="t" style="left:194.98px;top:462.00px;font-size:17.43px;font-weight:400;color:#000;font-family:'Liberation Sans';transform:scaleX(1.015)">From K486</div><div class="t" style="left:181.66px;top:527.00px;font-size:17.71px;font-weight:400;color:#000;font-family:'Liberation Sans';transform:scaleX(1.063)">Start</div><div class="t" style="left:246.72px;top:525.00px;font-size:17.71px;font-weight:400;color:#000;font-family:'Liberation Sans';transform:scaleX(1.109)">Stop</div><div class="t" style="left:163.13px;top:611.00px;font-size:8.49px;font-weight:400;color:#000;font-family:'Liberation Sans';transform:scaleX(0.979)">File name</div><div class="t" style="left:157.41px;top:814.00px;font-size:10.14px;font-weight:400;color:#000;font-family:'Liberation Sans';transform:scaleX(0.962)">change</div><div class="t" style="left:160.20px;top:825.00px;font-size:9.86px;font-weight:400;color:#000;font-family:'Liberation Sans';transform:scaleX(1.014)">graph</div><div class="t" style="left:157.42px;top:836.00px;font-size:10.14px;font-weight:400;color:#000;font-family:'Liberation Sans';transform:scaleX(0.937)">colors</div><div class="t" style="left:262.79px;top:107.00px;font-size:8.22px;font-weight:400;color:#000;font-family:'Liberation Sans';transform:scaleX(1.001)">Collection progress</div><div class="t" style="left:253.72px;top:140.00px;font-size:8.29px;font-weight:400;color:#000;font-family:'Liberation Sans';transform:scaleX(0.855)">0</div><div class="t" style="left:328.24px;top:140.00px;font-size:8.29px;font-weight:400;color:#000;font-family:'Liberation Sans';transform:scaleX(0.990)">430000</div><div class="t" style="left:365.43px;top:123.00px;font-size:26.58px;font-weight:400;color:#000;font-family:'Liberation Sans';transform:scaleX(1.034)">Intensity Graph</div><div class="t" style="left:333.95px;top:484.00px;font-size:18.22px;font-weight:400;color:#000;font-family:'Liberation Sans';transform:scaleX(1.064)">P7888 data actual</div><div class="t" style="left:406.19px;top:159.00px;font-size:9.71px;font-weight:400;color:#000;font-family:'Liberation Sans';transform:scaleX(1.036)">130</div><div class="t" style="left:406.19px;top:179.00px;font-size:9.71px;font-weight:400;color:#000;font-family:'Liberation Sans';transform:scaleX(1.036)">120</div><div class="t" style="left:406.15px;top:199.00px;font-size:9.71px;font-weight:400;color:#000;font-family:'Liberation Sans';transform:scaleX(1.092)">110</div><div class="t" style="left:406.19px;top:220.00px;font-size:9.71px;font-weight:400;color:#000;font-family:'Liberation Sans';transform:scaleX(1.036)">100</div><div class="t" style="left:411.69px;top:240.00px;font-size:9.71px;font-weight:400;color:#000;font-family:'Liberation Sans';transform:scaleX(1.050)">90</div><div class="t" style="left:411.80px;top:260.00px;font-size:9.71px;font-weight:400;color:#000;font-family:'Liberation Sans';transform:scaleX(1.039)">80</div><div class="t" style="left:411.69px;top:280.00px;font-size:9.71px;font-weight:400;color:#000;font-family:'Liberation Sans';transform:scaleX(1.050)">70</div><div class="t" style="left:411.69px;top:301.00px;font-size:9.71px;font-weight:400;color:#000;font-family:'Liberation Sans';transform:scaleX(1.050)">60</div><div class="t" style="left:411.80px;top:321.00px;font-size:9.71px;font-weight:400;color:#000;font-family:'Liberation Sans';transform:scaleX(1.039)">50</div><div class="t" style="left:412.00px;top:341.00px;font-size:9.71px;font-weight:400;color:#000;font-family:'Liberation Sans';transform:scaleX(1.020)">40</div><div class="t" style="left:411.80px;top:361.00px;font-size:9.71px;font-weight:400;color:#000;font-family:'Liberation Sans';transform:scaleX(1.039)">30</div><div class="t" style="left:411.69px;top:381.00px;font-size:9.71px;font-weight:400;color:#000;font-family:'Liberation Sans';transform:scaleX(1.050)">20</div><div class="t" style="left:411.36px;top:402.00px;font-size:9.71px;font-weight:400;color:#000;font-family:'Liberation Sans';transform:scaleX(1.081)">10</div><div class="t" style="left:416.97px;top:422.00px;font-size:9.71px;font-weight:400;color:#000;font-family:'Liberation Sans';transform:scaleX(1.115)">0</div><div class="t" style="left:428.18px;top:434.00px;font-size:10.00px;font-weight:400;color:#000;font-family:'Liberation Sans';transform:scaleX(1.062)">0</div><div class="t" style="left:899.11px;top:434.00px;font-size:9.43px;font-weight:400;color:#000;font-family:'Liberation Sans';transform:scaleX(1.036)">3392</div><div class="t" style="left:653.92px;top:447.00px;font-size:11.51px;font-weight:400;color:#000;font-family:'Liberation Sans';transform:scaleX(0.771)">Time</div><div class="t" style="left:958.62px;top:156.00px;font-size:10.29px;font-weight:400;color:#000;font-family:'Liberation Sans';transform:scaleX(0.924)">528971</div><div class="t" style="left:958.80px;top:278.00px;font-size:10.43px;font-weight:400;color:#000;font-family:'Liberation Sans';transform:scaleX(0.959)">0</div><div class="t" style="left:350.41px;top:510.00px;font-size:9.71px;font-weight:400;color:#000;font-family:'Liberation Sans';transform:scaleX(0.995)">550000</div><div class="t" style="left:350.41px;top:541.00px;font-size:9.71px;font-weight:400;color:#000;font-family:'Liberation Sans';transform:scaleX(0.995)">500000</div><div class="t" style="left:350.61px;top:573.00px;font-size:9.71px;font-weight:400;color:#000;font-family:'Liberation Sans';transform:scaleX(0.989)">450000</div><div class="t" style="left:350.61px;top:604.00px;font-size:9.71px;font-weight:400;color:#000;font-family:'Liberation Sans';transform:scaleX(0.989)">400000</div><div class="t" style="left:350.41px;top:635.00px;font-size:9.71px;font-weight:400;color:#000;font-family:'Liberation Sans';transform:scaleX(0.995)">350000</div><div class="t" style="left:350.41px;top:667.00px;font-size:9.71px;font-weight:400;color:#000;font-family:'Liberation Sans';transform:scaleX(0.995)">300000</div><div class="t" style="left:350.32px;top:698.00px;font-size:9.71px;font-weight:400;color:#000;font-family:'Liberation Sans';transform:scaleX(0.998)">250000</div><div class="t" style="left:350.32px;top:729.00px;font-size:9.71px;font-weight:400;color:#000;font-family:'Liberation Sans';transform:scaleX(0.998)">200000</div><div class="t" style="left:350.02px;top:761.00px;font-size:9.71px;font-weight:400;color:#000;font-family:'Liberation Sans';transform:scaleX(1.007)">150000</div><div class="t" style="left:350.02px;top:792.00px;font-size:9.71px;font-weight:400;color:#000;font-family:'Liberation Sans';transform:scaleX(1.007)">100000</div><div class="t" style="left:355.66px;top:824.00px;font-size:9.71px;font-weight:400;color:#000;font-family:'Liberation Sans';transform:scaleX(1.001)">50000</div><div class="t" style="left:376.61px;top:855.00px;font-size:9.71px;font-weight:400;color:#000;font-family:'Liberation Sans';transform:scaleX(1.126)">0</div><div style="position:absolute;left:330.0px;top:864.0px;width:848.0px;height:16.0px;overflow:hidden"><div class="t" style="left:53.00px;top:3.00px;font-size:10.00px;font-weight:400;color:#000;font-family:'Liberation Sans';transform:scaleX(1.152)">0.0</div></div><div style="position:absolute;left:330.0px;top:864.0px;width:848.0px;height:16.0px;overflow:hidden"><div class="t" style="left:113.31px;top:3.00px;font-size:10.00px;font-weight:400;color:#000;font-family:'Liberation Sans';transform:scaleX(1.009)">10000.0</div></div><div style="position:absolute;left:330.0px;top:864.0px;width:848.0px;height:16.0px;overflow:hidden"><div class="t" style="left:184.34px;top:3.00px;font-size:10.00px;font-weight:400;color:#000;font-family:'Liberation Sans';transform:scaleX(1.000)">20000.0</div></div><div style="position:absolute;left:330.0px;top:864.0px;width:848.0px;height:16.0px;overflow:hidden"><div class="t" style="left:255.16px;top:3.00px;font-size:10.00px;font-weight:400;color:#000;font-family:'Liberation Sans';transform:scaleX(0.997)">30000.0</div></div><div style="position:absolute;left:330.0px;top:864.0px;width:848.0px;height:16.0px;overflow:hidden"><div class="t" style="left:326.08px;top:3.00px;font-size:10.00px;font-weight:400;color:#000;font-family:'Liberation Sans';transform:scaleX(0.992)">40000.0</div></div><div style="position:absolute;left:330.0px;top:864.0px;width:848.0px;height:16.0px;overflow:hidden"><div class="t" style="left:396.60px;top:3.00px;font-size:10.00px;font-weight:400;color:#000;font-family:'Liberation Sans';transform:scaleX(0.997)">50000.0</div></div><div style="position:absolute;left:330.0px;top:864.0px;width:848.0px;height:16.0px;overflow:hidden"><div class="t" style="left:467.22px;top:3.00px;font-size:10.00px;font-weight:400;color:#000;font-family:'Liberation Sans';transform:scaleX(1.000)">60000.0</div></div><div style="position:absolute;left:330.0px;top:864.0px;width:848.0px;height:16.0px;overflow:hidden"><div class="t" style="left:537.94px;top:3.00px;font-size:10.00px;font-weight:400;color:#000;font-family:'Liberation Sans';transform:scaleX(1.000)">70000.0</div></div><div style="position:absolute;left:330.0px;top:864.0px;width:848.0px;height:16.0px;overflow:hidden"><div class="t" style="left:608.76px;top:3.00px;font-size:10.00px;font-weight:400;color:#000;font-family:'Liberation Sans';transform:scaleX(0.997)">80000.0</div></div><div style="position:absolute;left:330.0px;top:864.0px;width:848.0px;height:16.0px;overflow:hidden"><div class="t" style="left:679.38px;top:3.00px;font-size:10.00px;font-weight:400;color:#000;font-family:'Liberation Sans';transform:scaleX(1.000)">90000.0</div></div><div style="position:absolute;left:330.0px;top:864.0px;width:848.0px;height:16.0px;overflow:hidden"><div class="t" style="left:747.29px;top:3.00px;font-size:10.00px;font-weight:400;color:#000;font-family:'Liberation Sans';transform:scaleX(0.993)">100000.0</div></div><div style="position:absolute;left:330.0px;top:864.0px;width:848.0px;height:16.0px;overflow:hidden"><div class="t" style="left:818.00px;top:3.00px;font-size:10.00px;font-weight:400;color:#000;font-family:'Liberation Sans';transform:scaleX(1.011)">110000.0</div></div><div class="t" style="left:751.63px;top:881.00px;font-size:9.45px;font-weight:400;color:#000;font-family:'Liberation Sans';transform:scaleX(0.908)">Time</div><div class="t" style="left:1088.02px;top:474.00px;font-size:10.27px;font-weight:400;color:#000;font-family:'Liberation Sans';transform:scaleX(0.955)">New data</div><div class="t" style="left:1088.32px;top:492.00px;font-size:9.59px;font-weight:400;color:#000;font-family:'Liberation Sans';transform:scaleX(1.007)">Old data</div><div class="t" style="left:1195.29px;top:809.00px;font-size:9.71px;font-weight:700;color:#000;font-family:'Liberation Sans';transform:scaleX(1.050)">Cursors:</div><div class="t" style="left:1284.10px;top:809.00px;font-size:9.86px;font-weight:700;color:#000;font-family:'Liberation Sans';transform:scaleX(0.983)">X</div><div class="t" style="left:1324.51px;top:809.00px;font-size:9.86px;font-weight:700;color:#000;font-family:'Liberation Sans';transform:scaleX(0.982)">Y</div><div class="t" style="left:1224.91px;top:824.00px;font-size:10.29px;font-weight:400;color:#000;font-family:'Liberation Sans';transform:scaleX(0.949)">Cursor 0</div><div style="position:absolute;left:1281.0px;top:820.0px;width:38.0px;height:16.0px;overflow:hidden"><div class="t" style="left:2.68px;top:4.00px;font-size:10.29px;font-weight:400;color:#000;font-family:'Liberation Sans';transform:scaleX(1.016)">21247.9</div></div><div class="t" style="left:1324.21px;top:824.00px;font-size:10.29px;font-weight:400;color:#000;font-family:'Liberation Sans';transform:scaleX(0.961)">70000</div><div class="t" style="left:375.72px;top:288.07px;font-size:9.89px;transform-origin:23.73px 6.03px;transform:rotate(-90deg) scaleX(0.998)">Frequency</div><div class="t" style="left:984.56px;top:214.51px;font-size:9.04px;transform-origin:19.89px 5.34px;transform:rotate(90deg) scaleX(1.048)">Amplitude</div>
</body></html>
